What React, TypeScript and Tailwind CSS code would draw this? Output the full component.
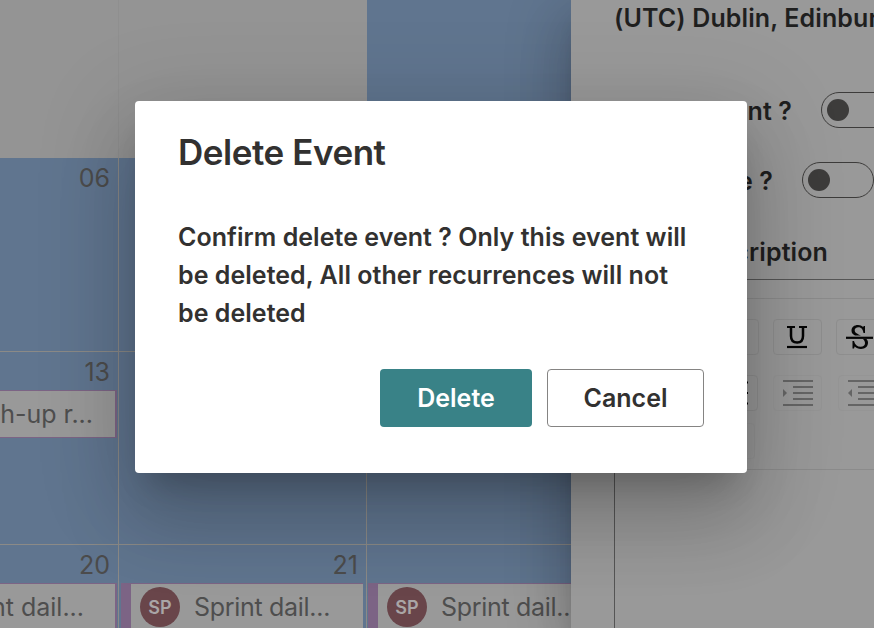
import type { ReactNode } from "react";

function Day({ day, children }: { day?: string; children?: ReactNode }) {
  return (
    <div className="min-w-0 border-r border-b border-[#8b8a87] bg-[#60758f]">
      <div className="h-[38px] pr-2 text-right text-[25px] leading-[40px] text-[#4c4c4c]">{day}</div>
      {children}
    </div>
  );
}

function Entry({ title, avatar = false, className }: { title: string; avatar?: boolean; className: string }) {
  return (
    <div className={`flex h-12 items-center border border-[#7c6485] bg-[#999] whitespace-nowrap text-[#4e4e4e] ${avatar ? "border-r-0 border-l-[10px] tracking-[-0.3px]" : "justify-end border-r-2 border-l-0"} ${className}`}>
      {avatar && (
        <span className="mr-[14px] flex size-10 shrink-0 items-center justify-center rounded-full bg-[#69454a] text-[18px] font-semibold tracking-normal text-[#a9a5a6]">SP</span>
      )}
      <span className="pt-0.5 text-[25px]">{title}</span>
    </div>
  );
}

function Toggle() {
  return (
    <span className="flex h-9 w-[72px] shrink-0 items-center rounded-full border border-[#3d3c3b] pl-[5px]">
      <span className="size-[22px] rounded-full bg-[#3d3c3b]" />
    </span>
  );
}

function Tool({ children, faint = false }: { children?: ReactNode; faint?: boolean }) {
  return (
    <span className={`flex h-9 w-[49px] shrink-0 items-center justify-center rounded border ${faint ? "border-[#959595]" : "border-[#8e8e8e]"}`}>{children}</span>
  );
}

function Indent({ back = false }: { back?: boolean }) {
  return (
    <svg width="30" height="26" viewBox="0 0 30 26" fill="#656565">
      <path d="M0 0h30v2H0zM10 6h20v2H10zM10 12h20v2H10zM10 18h20v2H10zM0 24h30v2H0z" />
      <path d={back ? "M4 9v8L0 13z" : "M0 9v8l4-4z"} />
    </svg>
  );
}

export default function App() {
  return (
    <div className="relative flex h-[628px] w-[874px] overflow-hidden bg-[#999] font-['Inter',sans-serif]">
      <main className="grid w-[571px] shrink-0 grid-cols-[119px_248px_248px] grid-rows-[158px_194px_193px_194px] overflow-hidden">
        <div className="border-r border-[#8f8f8f] bg-[#949494]" />
        <div className="bg-[#949494]" />
        <div className="bg-[#60758f]" />
        <Day day="06" />
        <Day />
        <Day />
        <Day day="13"><Entry title="Catch-up r..." className="mr-px pr-[22px]" /></Day>
        <Day />
        <Day />
        <Day day="20"><Entry title="Sprint dail..." className="mr-px pr-[31px]" /></Day>
        <Day day="21"><Entry avatar title="Sprint dail..." className="mr-[3px] ml-0.5 pl-[9px]" /></Day>
        <Day><Entry avatar title="Sprint dail..." className="mr-[3px] ml-px pl-[9px]" /></Day>
      </main>

      <aside className="z-10 flex h-full w-[303px] shrink-0 flex-col bg-[#999] pl-[43px] text-[25px] font-semibold tracking-[0.12px] whitespace-nowrap text-[#1f1f1f] shadow-[0_16px_20px_-10px_rgba(0,0,0,.2),0_32px_48px_4px_rgba(0,0,0,.14),0_12px_60px_10px_rgba(0,0,0,.12)]">
        <p className="h-[92px] leading-[37px]">(UTC) Dublin, Edinburgh</p>
        <div className="flex h-9 items-center">
          <span className="w-[178px] shrink-0 pt-[3px] text-right">Event ?</span>
          <span className="w-[29px] shrink-0" />
          <Toggle />
        </div>
        <div className="mt-[34px] flex h-9 items-center">
          <span className="w-[159px] shrink-0 pt-[3px] text-right">Private ?</span>
          <span className="w-[29px] shrink-0" />
          <Toggle />
        </div>
        <p className="mt-[34px] h-[47px] w-[214px] text-right leading-[41px]">Description</p>
        <section className="flex-1 border-t border-l border-[#555]">
          <div className="mt-[18px] h-[172px] border-t border-b border-[#8b8b8b] pt-5">
            <div className="flex gap-[14px] pl-[95px]">
              <Tool />
              <Tool>
                <svg className="-ml-0.5" width="20" height="24" viewBox="0 0 20 24" fill="none" stroke="#050505">
                  <path d="M0 2h8M12 2h8" strokeWidth="1.8" />
                  <path d="M4 2v9c0 4.500 2 6.500 6.200 6.500s5.800-2 5.800-6.500V2" strokeWidth="2.5" />
                  <path d="M0 22h20" strokeWidth="2.2" />
                </svg>
              </Tool>
              <Tool>
                <svg className="-ml-0.5" width="27" height="26" viewBox="0 0 27 26" fill="#050505">
                  <path d="M19 2v7h-1.500C17 5.500 15.500 3.200 12.500 3.200C10 3.200 8.700 4.500 8.700 6.300C8.700 9 11.500 10 15 11.500H9C6.700 10.300 5.500 9 5.500 6.500C5.500 3.200 8.200 1 12 1c2.200 0 3.800.7 5.200 2L17.700 2z" />
                  <path d="M17 15h3.500c1 1.200 1.500 2.300 1.500 3.800c0 3.800-3 6.200-7 6.200c-2.700 0-4.700-1-6.300-2.500L8 24.500H6.500V17H8c.8 3.800 3.300 5.800 6.700 5.800c2.600 0 4.300-1.400 4.300-3.600c0-1.600-.7-2.800-2-4.200z" />
                  <path d="M0 12.700h27v2.200H0z" />
                </svg>
              </Tool>
            </div>
            <div className="mt-5 flex pl-[94px]">
              <Tool>
                <svg width="30" height="26" viewBox="0 0 30 26" fill="#050505"><path d="M0 1.500h29v2H0zM0 12h29v2H0zM0 22.500h29v2H0z" /></svg>
              </Tool>
              <span className="ml-[15px] flex gap-4"><Tool faint><Indent /></Tool><Tool faint><Indent back /></Tool></span>
            </div>
            <div className="mt-3 flex pl-[91px]"><Tool faint /></div>
          </div>
        </section>
      </aside>

      <div role="dialog" className="absolute top-[101px] left-[135px] z-20 flex h-[372px] w-[612px] flex-col rounded bg-white pt-[31px] pr-[43px] pl-[43px] text-[#323130] shadow-[0_22px_30px_-14px_rgba(0,0,0,.2),0_48px_76px_6px_rgba(0,0,0,.14),0_18px_92px_16px_rgba(0,0,0,.12)]">
        <h1 className="text-[35px] leading-10 font-semibold tracking-[-0.45px]">Delete Event</h1>
        <p className="mt-[46px] text-[25px] leading-[38px] font-semibold tracking-[0.04px] whitespace-nowrap">
          Confirm delete event ? Only this event will<br />be deleted, All other recurrences will not<br />be deleted
        </p>
        <div className="mt-[37px] flex justify-end gap-[15px] text-[25px] font-semibold">
          <button className="h-[58px] w-[152px] rounded bg-[#398287] pt-0.5 text-white">Delete</button>
          <button className="h-[58px] w-[157px] rounded border border-[#858483] pt-0.5">Cancel</button>
        </div>
      </div>
    </div>
  );
}
